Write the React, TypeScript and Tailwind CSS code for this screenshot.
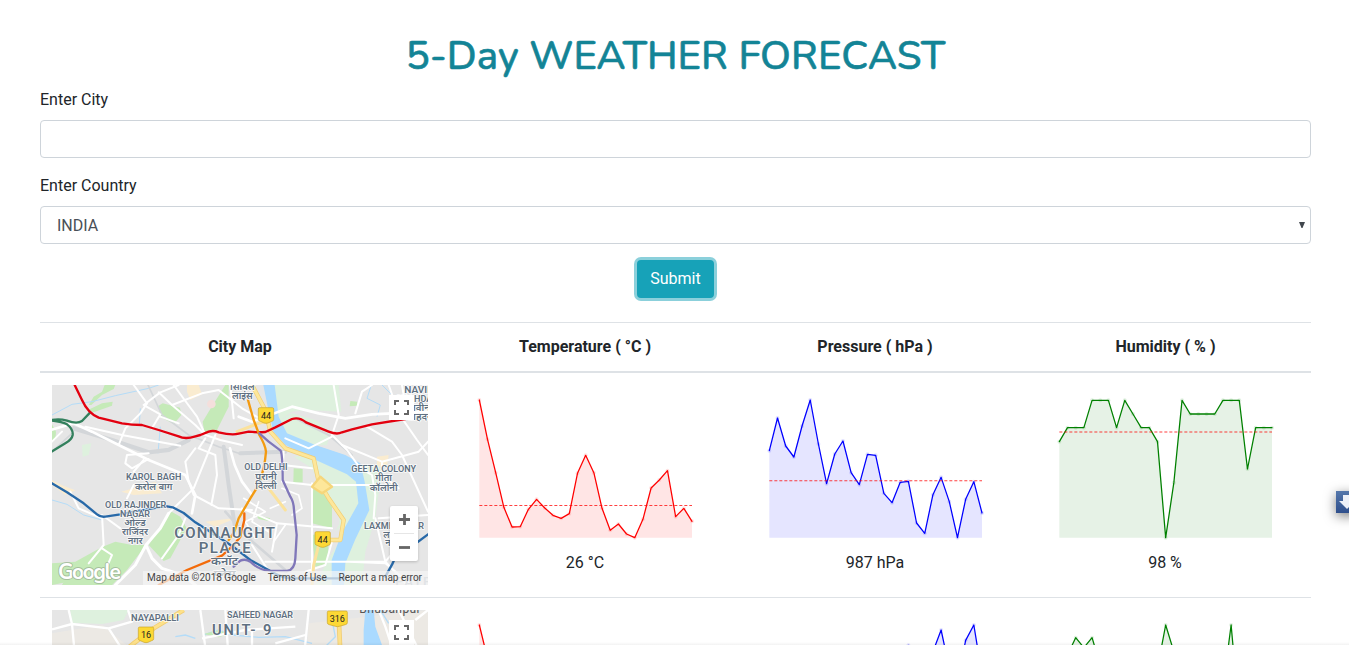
import type { ReactNode } from "react";

type Series = { color: string; fill: string; mean: number; values: number[] };

const STEP = 24.54;

const rows: { readings: { label: string; series: Series }[] }[] = [
  {
    readings: [
      {
        label: "26 °C",
        series: {
          color: "#ff0000",
          fill: "#ffe5e5",
          mean: 346.5,
          values: [30, 148, 248, 352, 411, 410, 358, 328, 354, 376, 385, 371, 250, 196, 248, 355, 421, 402, 432, 443, 388, 294, 270, 242, 380, 355, 394],
        },
      },
      {
        label: "987 hPa",
        series: {
          color: "#0000ff",
          fill: "#e5e5ff",
          mean: 272.5,
          values: [182, 84, 168, 201, 108, 30, 162, 281, 192, 153, 248, 284, 193, 196, 310, 338, 277, 274, 399, 430, 314, 262, 335, 443, 328, 275, 369],
        },
      },
      {
        label: "98 %",
        series: {
          color: "#008000",
          fill: "#e6f2e6",
          mean: 126,
          values: [155, 113, 113, 113, 31, 31, 31, 113, 31, 72, 113, 113, 155, 443, 278, 31, 72, 72, 72, 72, 31, 31, 31, 237, 113, 113, 113],
        },
      },
    ],
  },
  {
    readings: [
      {
        label: "25 °C",
        series: {
          color: "#ff0000",
          fill: "#ffe5e5",
          mean: 300,
          values: [30, 130, 230, 330, 400, 410, 340, 300, 320, 340, 350, 300, 220, 180, 220, 330, 400, 390, 420, 443, 380, 260, 240, 220, 360, 340, 380],
        },
      },
      {
        label: "1010 hPa",
        series: {
          color: "#0000ff",
          fill: "#e5e5ff",
          mean: 260,
          values: [443, 380, 400, 420, 330, 260, 320, 400, 300, 240, 320, 380, 260, 220, 280, 300, 200, 91, 180, 200, 110, 45, 160, 200, 76, 30, 180],
        },
      },
      {
        label: "95 %",
        series: {
          color: "#008000",
          fill: "#e6f2e6",
          mean: 180,
          values: [150, 120, 68, 98, 68, 150, 200, 180, 180, 200, 220, 240, 160, 30, 110, 160, 200, 180, 180, 200, 220, 30, 300, 200, 180, 180, 180],
        },
      },
    ],
  },
];

function Sparkline({ color, fill, mean, values }: Series) {
  const points = values.map((v, i) => [58 + i * STEP, v]);
  const line = points.map((p) => p.join(",")).join(" ");
  return (
    <svg viewBox="0 0 750 480" className="block h-[160px] w-[250px]">
      <polygon points={`58,443 ${line} 696,443`} fill={fill} />
      {points.map(([x, y], i) => (
        <circle key={i} cx={x} cy={y} r="6" fill={color} fillOpacity="0.12" />
      ))}
      <polyline points={line} fill="none" stroke={color} strokeWidth="3.8" strokeLinejoin="round" strokeLinecap="round" />
      <path d={`M58 ${mean}H696`} stroke="#ff0000" strokeOpacity="0.75" strokeWidth="3.2" strokeDasharray="9 6" />
    </svg>
  );
}

function Label({ x, y, w, size = 27, children }: { x: number; y: number; w: number; size?: number; children: string }) {
  return (
    <text
      x={x}
      y={y}
      fontSize={size}
      textLength={w}
      lengthAdjust={size > 40 ? "spacing" : "spacingAndGlyphs"}
      textAnchor="middle"
      fontFamily="Roboto, 'Noto Sans', 'Noto Sans Devanagari', sans-serif"
      fontWeight="600"
      fill="#5f7081"
      stroke="#ffffff"
      strokeOpacity="0.85"
      strokeWidth="5"
      strokeLinejoin="round"
      paintOrder="stroke"
    >
      {children}
    </text>
  );
}

function Shield({ x, y, w = 46, children }: { x: number; y: number; w?: number; children: string }) {
  const r = w / 2;
  return (
    <g transform={`translate(${x} ${y})`}>
      <path
        d={`M${-r + 4} -23H${r - 4}Q${r} -23 ${r} -19V12Q${r} 17 ${r - 6} 18L6 23Q0 25 -6 23L${-r + 6} 18Q${-r} 17 ${-r} 12V-19Q${-r} -23 ${-r + 4} -23Z`}
        fill="#fdd835"
        stroke="#c9a32a"
        strokeWidth="2"
      />
      <text y="11" fontSize="27" textAnchor="middle" fontFamily="Roboto, sans-serif" fill="#222">
        {children}
      </text>
    </g>
  );
}

function DelhiMap() {
  return (
    <svg viewBox="0 0 1128 600" className="block h-[200px] w-[376px]">
      <rect width="1128" height="600" fill="#e6e6e6" />
      {/* parks and flood plains */}
      <g fill="#c5eab8">
        <path d="M118 60L150 30L185 12L190 0H158L150 20L125 35L110 60ZM125 82L180 62L182 50L150 55L108 75Z" />
        <path d="M320 62L332 55L384 68L388 90L366 117L326 97Z" />
        <path d="M520 0H530V65L495 135L458 148L452 110L475 72Z" />
        <path d="M0 118L12 140L10 164L0 168Z" />
        <path d="M355 378L385 395L404 430L355 520L335 528L290 480L325 425Z" />
        <path d="M282 480L225 555L180 600H30L70 530L150 486L190 470L240 480Z" />
        <path d="M0 535L70 530L50 590L0 600Z" />
        <path d="M725 250L752 252V292L724 295ZM784 300H800L840 365V430L780 415ZM780 450L830 440L828 535L790 545Z" />
        <path d="M895 48L916 50L915 62L893 64ZM612 390L655 400L650 408L620 402Z" />
      </g>
      <g fill="#def1de">
        <path d="M645 0H860L868 80L760 75L720 80L665 120Z" />
        <path d="M660 120L720 85L790 105L835 140L825 180L760 182L700 155Z" />
        <path d="M725 215L835 205L905 240L945 270L955 340L890 400L850 440L870 400L820 330L780 250Z" />
        <path d="M860 370L910 390L860 470L845 600H790L830 520L865 465Z" />
        <path d="M925 240L990 250L970 400L940 500L930 600H860Z" />
        <path d="M90 180L118 175L110 210L92 215Z" />
      </g>
      <g fill="#faecd0">
        <path d="M405 0H440L450 28L415 45L405 20ZM0 285L34 302L70 316L40 330L0 300Z" />
        <path d="M208 320L310 290L330 325L245 330ZM460 410L555 398L490 425Z" />
        <path d="M975 215L1010 210L1005 245H975Z" />
      </g>
      <g fill="#f4dfdc">
        <circle cx="478" cy="57" r="13" />
        <path d="M490 145H508V165H490Z" />
      </g>
      <path
        d="M634 0H668L680 95L705 145L790 180L880 210L925 235L938 290L952 375L909 465L880 535L876 600H839L839 525L869 445L919 355L912 290L885 268L770 215L700 180L664 140L648 70Z"
        fill="#aadaff"
      />
      <g fill="none" stroke="#b4dcf8" strokeWidth="3">
        <path d="M0 90L60 58L120 50L190 32L290 10L320 0M265 70L262 120M325 125L318 205" />
        <path d="M0 345L45 358L95 390L150 405M958 0L945 40L985 60L975 95M1020 30L990 0" />
      </g>
      {/* railway corridors */}
      <g fill="none" stroke="#d3d6d9" strokeLinecap="round">
        <path d="M65 130L180 165L290 202L350 195L410 165" strokeWidth="13" />
        <path d="M0 200L60 145M288 0L330 90L410 150L500 185L560 205" strokeWidth="5" />
        <path d="M515 185L530 300L548 420M565 205L700 200" strokeWidth="12" />
        <path d="M520 380L590 460L700 555" strokeWidth="8" />
        <path d="M730 100L830 150L900 210" strokeWidth="6" />
      </g>
      {/* streets */}
      <g fill="none" stroke="#ffffff" strokeWidth="6" strokeLinecap="round" strokeLinejoin="round">
        <path d="M-5 135L65 115L120 140L200 180L290 225L400 270L430 330L420 385" strokeWidth="8" />
        <path d="M100 125L210 150L290 165L385 182M245 0L285 55L265 85L220 130L200 180" />
        <path d="M275 60L325 22L380 0M320 22L360 60L430 120L460 150L505 165L570 180" />
        <path d="M365 0L400 48L435 95L460 150M278 62L325 88L300 130M325 95L380 115" />
        <path d="M360 60L450 25L500 15L570 70L640 110M535 0L545 100" />
        <path d="M290 205L225 210L220 235L240 250L290 222M275 225L245 260" />
        <path d="M460 160L440 190L490 210L495 270L478 360M430 190L400 230L410 290L425 330L500 370L600 375" />
        <path d="M150 390L155 480L110 535M150 390L205 430M150 490L180 510L165 545" />
        <path d="M350 385L325 430L282 480L250 540L190 600M282 480L300 520L330 550L390 570L430 600" strokeWidth="9" />
        <path d="M350 385L425 310L490 150M245 300L225 340M400 400L380 450L330 520" />
        <path d="M0 170L30 140M55 320L80 370L150 400" />
        <path d="M534 190L548 240L570 290L600 330M560 95L600 110L720 65L800 85L880 100L960 88L1128 80" strokeWidth="8" />
        <path d="M845 0L860 90L840 150L885 195L925 250L960 270L970 330L965 400M945 125L1020 170L1050 210L1128 380" />
        <path d="M840 155L770 190L700 160M870 180L990 230L1100 200L1128 170M990 230L990 270L1040 310" />
        <path d="M1010 0L1040 85L1095 165L1128 210M1050 0L1060 60M910 85L930 20L960 0" />
        <path d="M695 200L690 290L780 300H960M690 240L780 250M780 295V560M675 415L840 430M570 370L675 415L660 500" />
        <path d="M640 530H1000L1060 460M980 400L1128 390M1000 530L1060 595M1000 530L970 400M890 530L1000 535L1080 600M600 480L670 590M760 560L820 540L840 470" />
        <path d="M575 340L640 380L580 410L610 460M700 420L665 470M620 350L600 410L650 440M690 310L740 330L750 370L720 390M655 370L700 350" strokeWidth="5" />
      </g>
      {/* highways */}
      <g fill="none" strokeLinecap="round" strokeLinejoin="round">
        <path d="M600 0L640 75L655 140L700 190L785 220L800 290L830 340L875 405L865 465H830" stroke="#f1cd74" strokeWidth="13" />
        <path d="M600 0L640 75L655 140L700 190L785 220L800 290L830 340L875 405L865 465H830" stroke="#fde79a" strokeWidth="9" />
        <path d="M780 600L785 540L800 480M555 140L620 115L660 105M650 310L700 375" stroke="#fbe29c" strokeWidth="9" />
        <path d="M805 275L780 305L810 325L840 305Z" stroke="#f6d67b" strokeWidth="7" fill="#fde79a" />
      </g>
      {/* metro lines */}
      <g fill="none" strokeLinejoin="round" strokeLinecap="round" strokeWidth="7">
        <path d="M-5 106Q20 100 45 107Q75 118 90 108L114 83M-5 106Q30 110 45 118Q64 132 62 150Q60 163 40 175L-5 202" stroke="#33805d" />
        <path d="M-5 292L45 322L95 355L135 388Q145 397 160 395L205 388L300 370L345 364L362 367L395 384L430 412L505 460L550 490L595 525L655 558Q690 580 720 580H880M1000 575L1022 535Q1030 515 1045 505L1085 480L1128 448" stroke="#2869a8" />
        <path d="M68 0L90 45Q108 85 140 98L210 115Q240 120 270 120L320 135L380 154Q400 164 430 154L445 150L470 140Q485 135 500 142Q540 152 560 146L590 140Q615 143 640 141L670 127L720 102Q742 95 762 112L830 140Q855 150 870 142L900 133L960 118L1060 102" stroke="#e3000f" />
        <path d="M588 45L605 105L622 150Q640 180 642 200Q638 250 620 300L595 340L560 400L547 440L530 465" stroke="#f39a11" />
        <path d="M320 600L405 555L510 512L545 480L565 455L577 405V385" stroke="#f36b0a" />
        <path d="M622 145L650 170L685 196Q692 205 692 285L715 335Q725 350 726 375L734 450L730 520Q728 555 705 558L650 557Q620 555 595 530Q580 520 565 527L545 545" stroke="#8077b9" />
      </g>
      <Shield x={642} y={91}>44</Shield>
      <Shield x={812} y={463}>44</Shield>
      {/* place names */}
      <Label x={571} y={14} w={74}>सिविल</Label>
      <Label x={571} y={42} w={62}>लाइंस</Label>
      <Label x={1102} y={24} w={90}>NAVIN</Label>
      <Label x={1104} y={52} w={146}>SHAHDARA</Label>
      <Label x={1104} y={78} w={60}>नवीन</Label>
      <Label x={1104} y={106} w={86}>शाहदरा</Label>
      <Label x={305} y={286} w={166}>KAROL BAGH</Label>
      <Label x={305} y={314} w={112}>करोल बाग</Label>
      <Label x={642} y={256} w={130}>OLD DELHI</Label>
      <Label x={642} y={284} w={64}>पुरानी</Label>
      <Label x={642} y={311} w={64}>दिल्ली</Label>
      <Label x={995} y={261} w={194}>GEETA COLONY</Label>
      <Label x={995} y={289} w={50}>गीता</Label>
      <Label x={995} y={317} w={84}>कॉलोनी</Label>
      <Label x={251} y={369} w={184}>OLD RAJINDER</Label>
      <Label x={249} y={396} w={90}>NAGAR</Label>
      <Label x={249} y={424} w={64}>ओल्ड</Label>
      <Label x={249} y={451} w={78}>राजिंदर</Label>
      <Label x={250} y={478} w={44}>नगर</Label>
      <Label x={1026} y={432} w={180}>LAXMI NAGAR</Label>
      <Label x={1022} y={458} w={56}>लक्ष्मी</Label>
      <Label x={1022} y={484} w={44}>नगर</Label>
      <Label x={518} y={460} w={302} size={45}>CONNAUGHT</Label>
      <Label x={518} y={505} w={156} size={45}>PLACE</Label>
      <Label x={518} y={541} w={82} size={34}>कनॉट</Label>
      <Label x={518} y={578} w={66} size={34}>प्लेस</Label>
      <text x="1030" y="602" fontSize="40" letterSpacing="4" fontFamily="Roboto, sans-serif" fontWeight="500" fill="#aeb8c2">
        PATPAR
      </text>
    </svg>
  );
}

function BhubaneswarMap() {
  return (
    <svg viewBox="0 0 1128 600" className="block h-[200px] w-[376px]">
      <rect width="1128" height="600" fill="#e6e6e6" />
      <path d="M55 0H230L215 30L150 42L60 38Z" fill="#def1de" />
      <path d="M0 70L150 45L230 110L170 300H0ZM770 40L1128 0V200H760Z" fill="#ece9e4" />
      <path d="M940 0H965L970 50L990 105V200H935L935 60Z" fill="#aadaff" />
      <path d="M455 75L500 60L540 75L620 82L700 80L780 100M840 30L850 80L820 110M985 0L1010 40M370 80L400 75L430 85" fill="none" stroke="#b4dcf8" strokeWidth="4" />
      <path d="M455 72L500 60L530 72L500 82Z" fill="#c5eab8" />
      <g fill="none" stroke="#ffffff" strokeWidth="7" strokeLinejoin="round">
        <path d="M0 58L60 42L170 55L240 35L228 0M50 0L60 42L70 150M170 55L205 110L215 150" />
        <path d="M445 0L465 150M520 0L530 150M450 85L580 60L730 50M770 0L755 150M600 60V150M670 100L760 75" />
        <path d="M980 0L1000 50L1020 110M1040 0L1095 110M1128 0L1090 30" />
      </g>
      <path d="M395 0L305 55L245 100L215 125M860 20L866 150" fill="none" stroke="#f1cd74" strokeWidth="14" />
      <path d="M395 0L305 55L245 100L215 125M860 20L866 150" fill="none" stroke="#fde18a" strokeWidth="9" />
      <Shield x={282} y={74}>16</Shield>
      <Shield x={856} y={26} w={60}>316</Shield>
      <Label x={309} y={33} w={144}>NAYAPALLI</Label>
      <Label x={624} y={24} w={198}>SAHEED NAGAR</Label>
      <Label x={569} y={76} w={178} size={44}>UNIT- 9</Label>
      <text x="1014" y="8" fontSize="36" textLength="184" textAnchor="middle" fontFamily="Roboto, sans-serif" fill="#555">
        Bhubanpur
      </text>
    </svg>
  );
}

function MapFrame({ children }: { children: ReactNode }) {
  return (
    <div className="relative h-[200px] w-[376px] overflow-hidden">
      {children}
      <div className="absolute left-[337px] top-[10px] flex h-[25px] w-[25px] items-center justify-center bg-white">
        <svg viewBox="0 0 15 15" className="h-[15px] w-[15px]" fill="none" stroke="#666" strokeWidth="2">
          <path d="M1 5V1H5M10 1H14V5M14 10V14H10M5 14H1V10" />
        </svg>
      </div>
      <div className="absolute left-[338px] top-[121px] flex h-[55px] w-[28px] flex-col items-center rounded-[2px] bg-white shadow-[0_1px_3px_rgba(0,0,0,0.2)]">
        <svg viewBox="0 0 28 27" className="h-[27px] w-[28px]" fill="none" stroke="#666" strokeWidth="2.8">
          <path d="M9 13.5H20M14.5 8V19" />
        </svg>
        <div className="h-px w-5 bg-[#e6e6e6]" />
        <svg viewBox="0 0 28 27" className="h-[27px] w-[28px]" fill="none" stroke="#666" strokeWidth="2.8">
          <path d="M9 13.5H20" />
        </svg>
      </div>
      <svg viewBox="0 0 70 26" className="absolute left-[4px] top-[174px] h-[26px] w-[70px]">
        <text
          x="2"
          y="19.5"
          fontSize="21"
          textLength="63"
          fontFamily="Nunito, Lato, sans-serif"
          fontWeight="700"
          fill="#fff"
          stroke="#7d8a7b"
          strokeOpacity="0.45"
          strokeWidth="2"
          paintOrder="stroke"
          strokeLinejoin="round"
        >
          Google
        </text>
      </svg>
      <div className="absolute right-0 top-[186px] flex h-[14px] w-[285px] items-start justify-between whitespace-nowrap bg-[#f5f5f5]/70 pl-1 pr-1.5 pt-px text-[10px] leading-3 text-[#444]">
        <span>Map data ©2018 Google</span>
        <span>Terms of Use</span>
        <span>Report a map error</span>
      </div>
    </div>
  );
}

const maps = [<DelhiMap key="delhi" />, <BhubaneswarMap key="bhubaneswar" />];

export default function App() {
  return (
    <div className="relative h-[645px] overflow-hidden bg-white font-[Roboto,sans-serif] text-base text-[#212529]">
      <main className="ml-10 w-[1271px] pt-8">
        <h1 className="mb-2 text-center font-[Nunito,Lato,sans-serif] text-[40px] font-medium leading-[48px] tracking-[0.06px] text-[#138496] [-webkit-text-stroke:0.6px_#138496]">
          5-Day WEATHER FORECAST
        </h1>
        <form className="mb-6" onSubmit={(e) => e.preventDefault()}>
          <label htmlFor="city" className="mb-2 block leading-6">
            Enter City
          </label>
          <input id="city" className="mb-4 block h-[38px] w-full rounded border border-[#ced4da] bg-white px-3 outline-none" />
          <label htmlFor="country" className="mb-2 block leading-6">
            Enter Country
          </label>
          <div className="mb-4 flex h-[38px] items-center rounded border border-[#ced4da] bg-white pr-[5px]">
            <select id="country" className="h-full grow appearance-none pl-4 pt-[2px] text-[#495057] outline-none">
              <option>INDIA</option>
            </select>
            <svg viewBox="0 0 6 6" className="h-[6px] w-[6px]" fill="#41474d">
              <path d="M0 0H6L3.5 6H2.5Z" />
            </svg>
          </div>
          <div className="flex justify-center">
            <button className="h-[38px] w-[77px] rounded bg-[#17a2b8] text-white shadow-[0_0_0_3px_rgba(23,162,184,0.5)]">Submit</button>
          </div>
        </form>
        <table className="w-full table-fixed border-separate border-spacing-0 text-center">
          <colgroup>
            <col className="w-[400px]" />
            <col className="w-[290px]" />
            <col className="w-[290px]" />
            <col className="w-[291px]" />
          </colgroup>
          <thead>
            <tr>
              {["City Map", "Temperature ( °C )", "Pressure ( hPa )", "Humidity ( % )"].map((h) => (
                <th key={h} className="border-b-2 border-t border-[#dee2e6] p-3 font-bold leading-6">
                  {h}
                </th>
              ))}
            </tr>
          </thead>
          <tbody>
            {rows.map((row, i) => (
              <tr key={i}>
                <td className={i ? "border-t border-[#dee2e6] p-3" : "p-3"}>
                  <MapFrame>{maps[i]}</MapFrame>
                </td>
                {row.readings.map(({ label, series }) => (
                  <td key={label} className={i ? "border-t border-[#dee2e6] p-3 align-top" : "p-3 align-top"}>
                    <div className="flex w-[266px] flex-col items-center gap-px pt-[5px]">
                      <Sparkline {...series} />
                      <span className="leading-6">{label}</span>
                    </div>
                  </td>
                ))}
              </tr>
            ))}
          </tbody>
        </table>
      </main>
      <div className="absolute left-[1336px] top-[491px] h-[22px] w-[22px] bg-linear-to-b from-[#5577ab] to-[#2f4f8c] shadow-[0_3px_12px_rgba(0,0,0,0.5)]">
        <svg viewBox="0 0 22 22" className="h-[22px] w-[22px]" fill="#eef1f8">
          <path d="M7 4H15V10H19L11 18L3 10H7Z" />
        </svg>
      </div>
      <div className="absolute bottom-0 left-0 h-[3px] w-full bg-linear-to-b from-transparent to-black/5" />
    </div>
  );
}
